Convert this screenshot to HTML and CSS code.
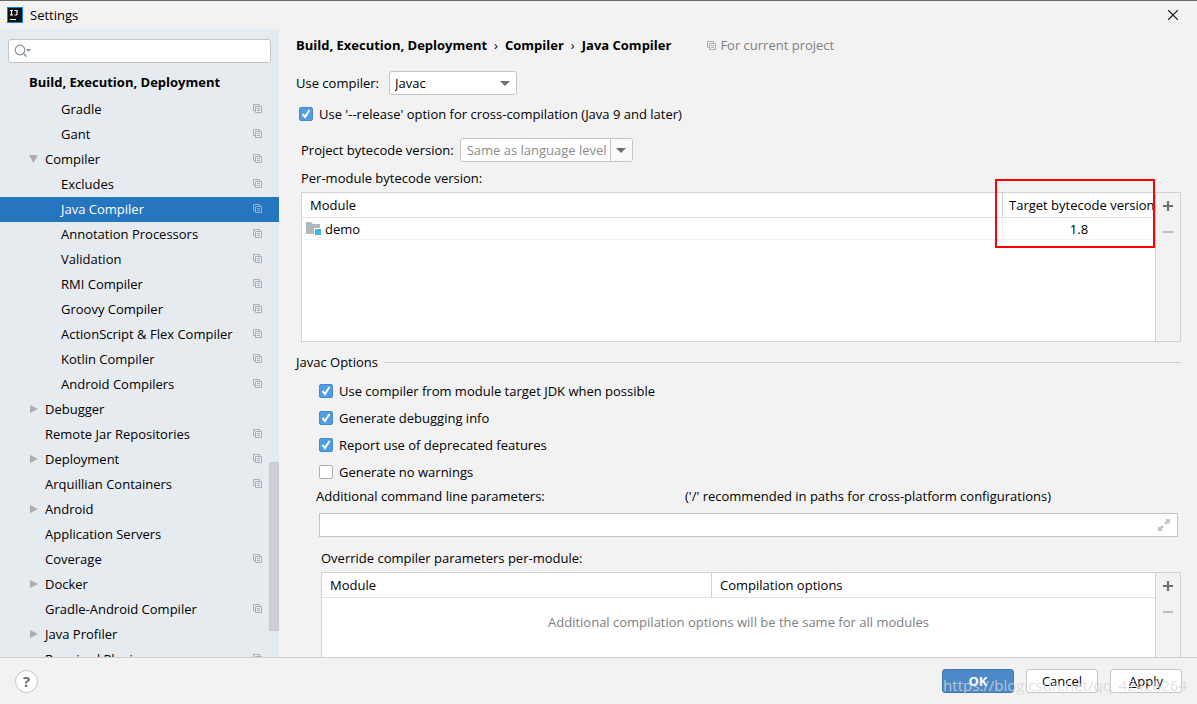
FILE: index.html
```html
<!DOCTYPE html>
<html lang="en">
<head>
<meta charset="utf-8">
<title>Settings</title>
<link rel="stylesheet" href="styles.css">
</head>
<body>
<svg class="defs" aria-hidden="true">
  <symbol id="copy" viewBox="0 0 9 9"><path d="M2 6.500H.5v-6h6V2M2.500 2.500h6v6h-6zM4 4.500h3M4 6.500h3" fill="none" stroke="currentColor"/></symbol>
  <symbol id="right" viewBox="0 0 9 10"><path d="M1 1l8 4-8 4z" fill="#adadad"/></symbol>
  <symbol id="down" viewBox="0 0 9 10"><path d="M0 1h9l-4.500 8z" fill="#adadad"/></symbol>
  <symbol id="plus" viewBox="0 0 10 10"><path d="M5 0v10M0 5h10" stroke="#6e6e6e" stroke-width="2"/></symbol>
  <symbol id="minus" viewBox="0 0 10 10"><path d="M0 5h10" stroke="#bdbdbd" stroke-width="2"/></symbol>
</svg>
<header class="titlebar">
  <svg class="logo" viewBox="0 0 16 16" aria-hidden="true"><rect width="16" height="16" fill="#087cfa"/><rect x="1" y="1" width="14" height="14" fill="#111"/><path d="M3 3.500h3M4.500 3v5M3 8h3M7.500 3.500H10V7Q10 8 9 8H7.500" fill="none" stroke="#fff" stroke-width="1.200"/><path d="M3 12.500h6" stroke="#fff"/></svg>
  <h1 class="title">Settings</h1>
  <button class="close" aria-label="Close"><svg viewBox="0 0 10 10"><path d="M0 0l10 10M10 0L0 10" stroke="#111" stroke-width="1.200"/></svg></button>
</header>
<main class="body">
  <nav class="sidebar" aria-label="Settings categories">
    <div class="search">
      <svg viewBox="0 0 18 14" aria-hidden="true"><circle cx="6" cy="6" r="4.800" fill="none" stroke="#8a9299" stroke-width="1.200"/><path d="M9.500 9.500l3 3" stroke="#8a9299" stroke-width="1.500"/><path d="M12 5h5l-2.500 3z" fill="#8a9299"/></svg>
      <input type="text" aria-label="Search settings">
    </div>
    <ul class="tree">
      <li class="group"><a href="#">Build, Execution, Deployment</a></li>
      <li class="leaf"><a href="#">Gradle</a><svg class="copy"><use href="#copy"/></svg></li>
      <li class="leaf"><a href="#">Gant</a><svg class="copy"><use href="#copy"/></svg></li>
      <li><svg class="arrow"><use href="#down"/></svg><a href="#">Compiler</a><svg class="copy"><use href="#copy"/></svg></li>
      <li class="leaf"><a href="#">Excludes</a><svg class="copy"><use href="#copy"/></svg></li>
      <li class="leaf selected"><a href="#" aria-current="page">Java Compiler</a><svg class="copy"><use href="#copy"/></svg></li>
      <li class="leaf"><a href="#">Annotation Processors</a><svg class="copy"><use href="#copy"/></svg></li>
      <li class="leaf"><a href="#">Validation</a><svg class="copy"><use href="#copy"/></svg></li>
      <li class="leaf"><a href="#">RMI Compiler</a><svg class="copy"><use href="#copy"/></svg></li>
      <li class="leaf"><a href="#">Groovy Compiler</a><svg class="copy"><use href="#copy"/></svg></li>
      <li class="leaf"><a href="#">ActionScript &amp; Flex Compiler</a><svg class="copy"><use href="#copy"/></svg></li>
      <li class="leaf"><a href="#">Kotlin Compiler</a><svg class="copy"><use href="#copy"/></svg></li>
      <li class="leaf"><a href="#">Android Compilers</a><svg class="copy"><use href="#copy"/></svg></li>
      <li><svg class="arrow"><use href="#right"/></svg><a href="#">Debugger</a></li>
      <li><span class="arrow"></span><a href="#">Remote Jar Repositories</a><svg class="copy"><use href="#copy"/></svg></li>
      <li><svg class="arrow"><use href="#right"/></svg><a href="#">Deployment</a><svg class="copy"><use href="#copy"/></svg></li>
      <li><span class="arrow"></span><a href="#">Arquillian Containers</a><svg class="copy"><use href="#copy"/></svg></li>
      <li><svg class="arrow"><use href="#right"/></svg><a href="#">Android</a></li>
      <li><span class="arrow"></span><a href="#">Application Servers</a></li>
      <li><span class="arrow"></span><a href="#">Coverage</a><svg class="copy"><use href="#copy"/></svg></li>
      <li><svg class="arrow"><use href="#right"/></svg><a href="#">Docker</a></li>
      <li><span class="arrow"></span><a href="#">Gradle-Android Compiler</a><svg class="copy"><use href="#copy"/></svg></li>
      <li><svg class="arrow"><use href="#right"/></svg><a href="#">Java Profiler</a></li>
      <li><span class="arrow"></span><a href="#">Required Plugins</a><svg class="copy"><use href="#copy"/></svg></li>
    </ul>
    <div class="thumb"></div>
  </nav>
  <section class="content">
    <div class="crumbs">
      <b>Build, Execution, Deployment</b><span class="sep">›</span><b>Compiler</b><span class="sep">›</span><b>Java Compiler</b>
      <span class="scope"><svg class="copy"><use href="#copy"/></svg>For current project</span>
    </div>
    <div class="compiler-row">
      <label for="compiler">Use compiler:</label>
      <span class="select"><select id="compiler"><option>Javac</option></select><svg class="caret" viewBox="0 0 10 5"><path d="M0 0h10L5 5z" fill="#6e6e6e"/></svg></span>
    </div>
    <label class="check release"><input type="checkbox" checked>Use '--release' option for cross-compilation (Java 9 and later)</label>
    <div class="version-row">
      <label for="version">Project bytecode version:</label>
      <span class="combo"><input id="version" type="text" placeholder="Same as language level"><button aria-label="Show versions"><svg viewBox="0 0 10 5"><path d="M0 0h10L5 5z" fill="#6e6e6e"/></svg></button></span>
    </div>
    <p class="caption modules-caption">Per-module bytecode version:</p>
    <div class="panel modules">
      <table>
        <thead><tr><th>Module</th><th class="target">Target bytecode version</th></tr></thead>
        <tbody><tr><td><span class="module"><svg viewBox="0 0 16 14"><path d="M0 0h5l2 2h7v10H0z" fill="#afb8be"/><path d="M8 6h8v8H8z" fill="#fff"/><path d="M9 7h6v6H9z" fill="#40b6e0"/></svg>demo</span></td><td class="value">1.8</td></tr></tbody>
      </table>
      <div class="tools"><button aria-label="Add"><svg><use href="#plus"/></svg></button><button aria-label="Remove" disabled><svg><use href="#minus"/></svg></button></div>
      <div class="highlight"></div>
    </div>
    <h2 class="section">Javac Options</h2>
    <div class="options">
      <label class="check"><input type="checkbox" checked>Use compiler from module target JDK when possible</label>
      <label class="check"><input type="checkbox" checked>Generate debugging info</label>
      <label class="check"><input type="checkbox" checked>Report use of deprecated features</label>
      <label class="check"><input type="checkbox">Generate no warnings</label>
    </div>
    <div class="params-row"><label for="params">Additional command line parameters:</label><span>('/' recommended in paths for cross-platform configurations)</span></div>
    <div class="params"><input id="params" type="text"><button aria-label="Expand"><svg viewBox="0 0 12 12"><path d="M7 0h5v5l-1.600-1.600L8 5.800 6.200 4l2.400-2.400zM5 12H0V7l1.600 1.600L4 6.200 5.800 8l-2.400 2.400z" fill="#bfc3c6"/></svg></button></div>
    <p class="caption override-caption">Override compiler parameters per-module:</p>
    <div class="panel override">
      <table>
        <thead><tr><th class="name">Module</th><th class="compilation">Compilation options</th></tr></thead>
        <tbody><tr><td colspan="2" class="empty">Additional compilation options will be the same for all modules</td></tr></tbody>
      </table>
      <div class="tools"><button aria-label="Add"><svg><use href="#plus"/></svg></button><button aria-label="Remove" disabled><svg><use href="#minus"/></svg></button></div>
    </div>
  </section>
</main>
<footer class="footer">
  <button class="help" aria-label="Help">?</button>
  <button class="btn primary">OK</button>
  <button class="btn">Cancel</button>
  <button class="btn"><u>A</u>pply</button>
  <span class="watermark">https://blog.csdn.net/qq_42428264</span>
</footer>
</body>
</html>
```
FILE: styles.css
```css
* { box-sizing: border-box; }
body {
  margin: 0;
  height: 100vh;
  display: flex;
  flex-direction: column;
  overflow: hidden;
  background: #f2f2f2;
  color: #000;
  font: 13px/20px "Open Sans", "Noto Sans", sans-serif;
}
svg { display: block; flex: none; }
button, input, select { font: inherit; color: inherit; margin: 0; }
button { padding: 0; border: 0; background: none; }
.defs { position: absolute; width: 0; height: 0; }

.titlebar {
  flex: none;
  height: 29px;
  display: flex;
  align-items: center;
  padding: 0 19px 0 7px;
  border-top: 1px solid #6b696b;
}
.logo { width: 16px; height: 16px; }
.title { margin: 0 auto 0 7px; font-size: 13px; font-weight: 400; }
.close svg { width: 10px; height: 10px; }

.body { flex: 1; min-height: 0; display: flex; }
.sidebar {
  position: relative;
  flex: none;
  width: 279px;
  overflow: hidden;
  background: #e6ebf0;
}
.search {
  display: flex;
  align-items: center;
  height: 24px;
  margin: 10px 8px 0;
  padding-left: 5px;
  background: #fff;
  border: 1px solid #c4c4c4;
  border-radius: 3px;
}
.search svg { width: 18px; height: 14px; }
.search input { flex: 1; min-width: 0; border: 0; outline: 0; background: none; }
.tree { list-style: none; margin: 7px 0 0; padding: 0; }
.tree li { display: flex; align-items: center; height: 25px; padding: 0 17px 2px 29px; }
.tree .leaf { padding-left: 61px; }
.tree .group { height: 27px; padding-bottom: 4px; font-weight: 700; }
.tree a { flex: 1; color: inherit; text-decoration: none; white-space: nowrap; }
.tree .selected { background: #2675bf; color: #fff; }
.arrow { width: 9px; height: 10px; margin-right: 7px; }
.copy { width: 9px; height: 9px; color: #a5b0b8; }
.thumb { position: absolute; right: 0; bottom: 26px; width: 10px; height: 169px; background: #cdd1d6; border: 1px solid #c6cace; }

.content { flex: 1; min-width: 0; overflow: hidden; display: flex; flex-direction: column; padding: 0 16px 0 17px; }
.content > * { flex: none; }
.crumbs { display: flex; align-items: center; height: 32px; }
.sep { margin: 0 7px; }
.scope { display: flex; align-items: center; gap: 4px; margin-left: 36px; color: #808080; }
.compiler-row { display: flex; align-items: center; gap: 10px; height: 24px; margin-top: 10px; }
.select { position: relative; display: flex; width: 128px; height: 24px; }
.select select {
  appearance: none;
  width: 100%;
  padding: 0 5px;
  background: #fff;
  border: 1px solid #c4c4c4;
  border-radius: 3px;
}
.caret { position: absolute; right: 7px; top: 10px; width: 10px; height: 5px; pointer-events: none; }
.check { display: flex; align-items: center; gap: 6px; height: 27px; }
.check input {
  appearance: none;
  width: 14px;
  height: 14px;
  background: #fff;
  border: 1px solid #b0b0b0;
  border-radius: 2px;
}
.check input:checked {
  border-color: #4688c9;
  background: #4f9ee3 url("data:image/svg+xml,%3Csvg xmlns='http://www.w3.org/2000/svg' viewBox='0 0 12 12'%3E%3Cpath d='M2.500 6l2.500 3 4.500-7' fill='none' stroke='white' stroke-width='2'/%3E%3C/svg%3E") center / 12px 12px no-repeat;
}
.release { height: 20px; margin: 9px 0 0 3px; }
.version-row { display: flex; align-items: center; gap: 6px; height: 24px; margin: 14px 0 0 5px; }
.combo { display: flex; width: 173px; height: 24px; background: #fff; border: 1px solid #c4c4c4; border-radius: 3px; overflow: hidden; }
.combo input { flex: 1; min-width: 0; padding: 0 0 0 6px; border: 0; outline: 0; background: none; }
.combo input::placeholder { color: #8c8c8c; opacity: 1; }
.combo button { width: 22px; display: grid; place-items: center; border-left: 1px solid #c4c4c4; background: #fafafa; }
.combo svg { width: 10px; height: 5px; }
.caption { margin: 0; }
.modules-caption { margin: 6px 0 0 5px; }

.panel { position: relative; display: flex; align-items: flex-start; margin-top: 4px; background: #fff; border: 1px solid #d1d1d1; }
.panel table { flex: 1; table-layout: fixed; border-collapse: separate; border-spacing: 0; width: 100%; }
.panel th { height: 25px; padding: 0 8px; border-bottom: 1px solid #e1e1e1; font-weight: 400; text-align: left; white-space: nowrap; }
.panel td { padding: 0; }
.tools { align-self: stretch; flex: none; width: 25px; display: flex; flex-direction: column; background: #f2f2f2; border-left: 1px solid #d1d1d1; }
.tools button { height: 26px; display: grid; place-items: center; }
.tools svg { width: 10px; height: 10px; }
.modules { height: 150px; margin-left: 5px; }
.modules td { height: 22px; border-bottom: 1px solid #f2f2f2; }
.modules .target { width: 153px; padding: 0 0 0 6px; border-left: 1px solid #d1d1d1; }
.modules .value { border-left: 1px solid #f2f2f2; text-align: center; }
.module { display: flex; align-items: center; gap: 3px; padding-left: 4px; }
.module svg { width: 16px; height: 14px; }
.highlight { position: absolute; top: -14px; right: 25px; width: 160px; height: 69px; border: 2px solid #f00; }

.section { display: flex; align-items: center; gap: 6px; margin: 10px 0 0; font-size: 13px; font-weight: 400; }
.section::after { content: ""; flex: 1; height: 1px; background: #d1d1d1; }
.options { margin: 5px 0 0 23px; }
.params-row { display: grid; grid-template-columns: 369px 1fr; margin: 1px 0 0 20px; }
.params { display: flex; height: 24px; margin: 7px 3px 0 23px; background: #fff; border: 1px solid #c4c4c4; }
.params input { flex: 1; border: 0; outline: 0; background: none; }
.params button { width: 26px; display: grid; place-items: center; }
.params svg { width: 12px; height: 12px; }
.override-caption { margin: 11px 0 0 25px; }
.override { height: 150px; margin-left: 25px; }
.override .name { width: 389px; }
.override .compilation { border-left: 1px solid #d1d1d1; }
.override .empty { height: 48px; text-align: center; color: #808080; }

.footer {
  position: relative;
  flex: none;
  height: 47px;
  display: flex;
  align-items: center;
  gap: 12px;
  padding: 0 15px;
  border-top: 1px solid #d1d1d1;
}
.help { width: 23px; height: 23px; margin-right: auto; border: 1px solid #c4c4c4; border-radius: 50%; background: #fff; color: #6e6e6e; font-size: 15px; font-weight: 700; }
.btn { width: 72px; height: 24px; border: 1px solid #c4c4c4; border-radius: 3px; background: #fff; }
.primary { background: #4d89c9; border-color: #4779b0; color: #fff; font-weight: 700; }
.watermark { position: absolute; right: 10px; bottom: 9px; font-size: 15px; color: rgba(215, 215, 215, 0.8); pointer-events: none; }
```
